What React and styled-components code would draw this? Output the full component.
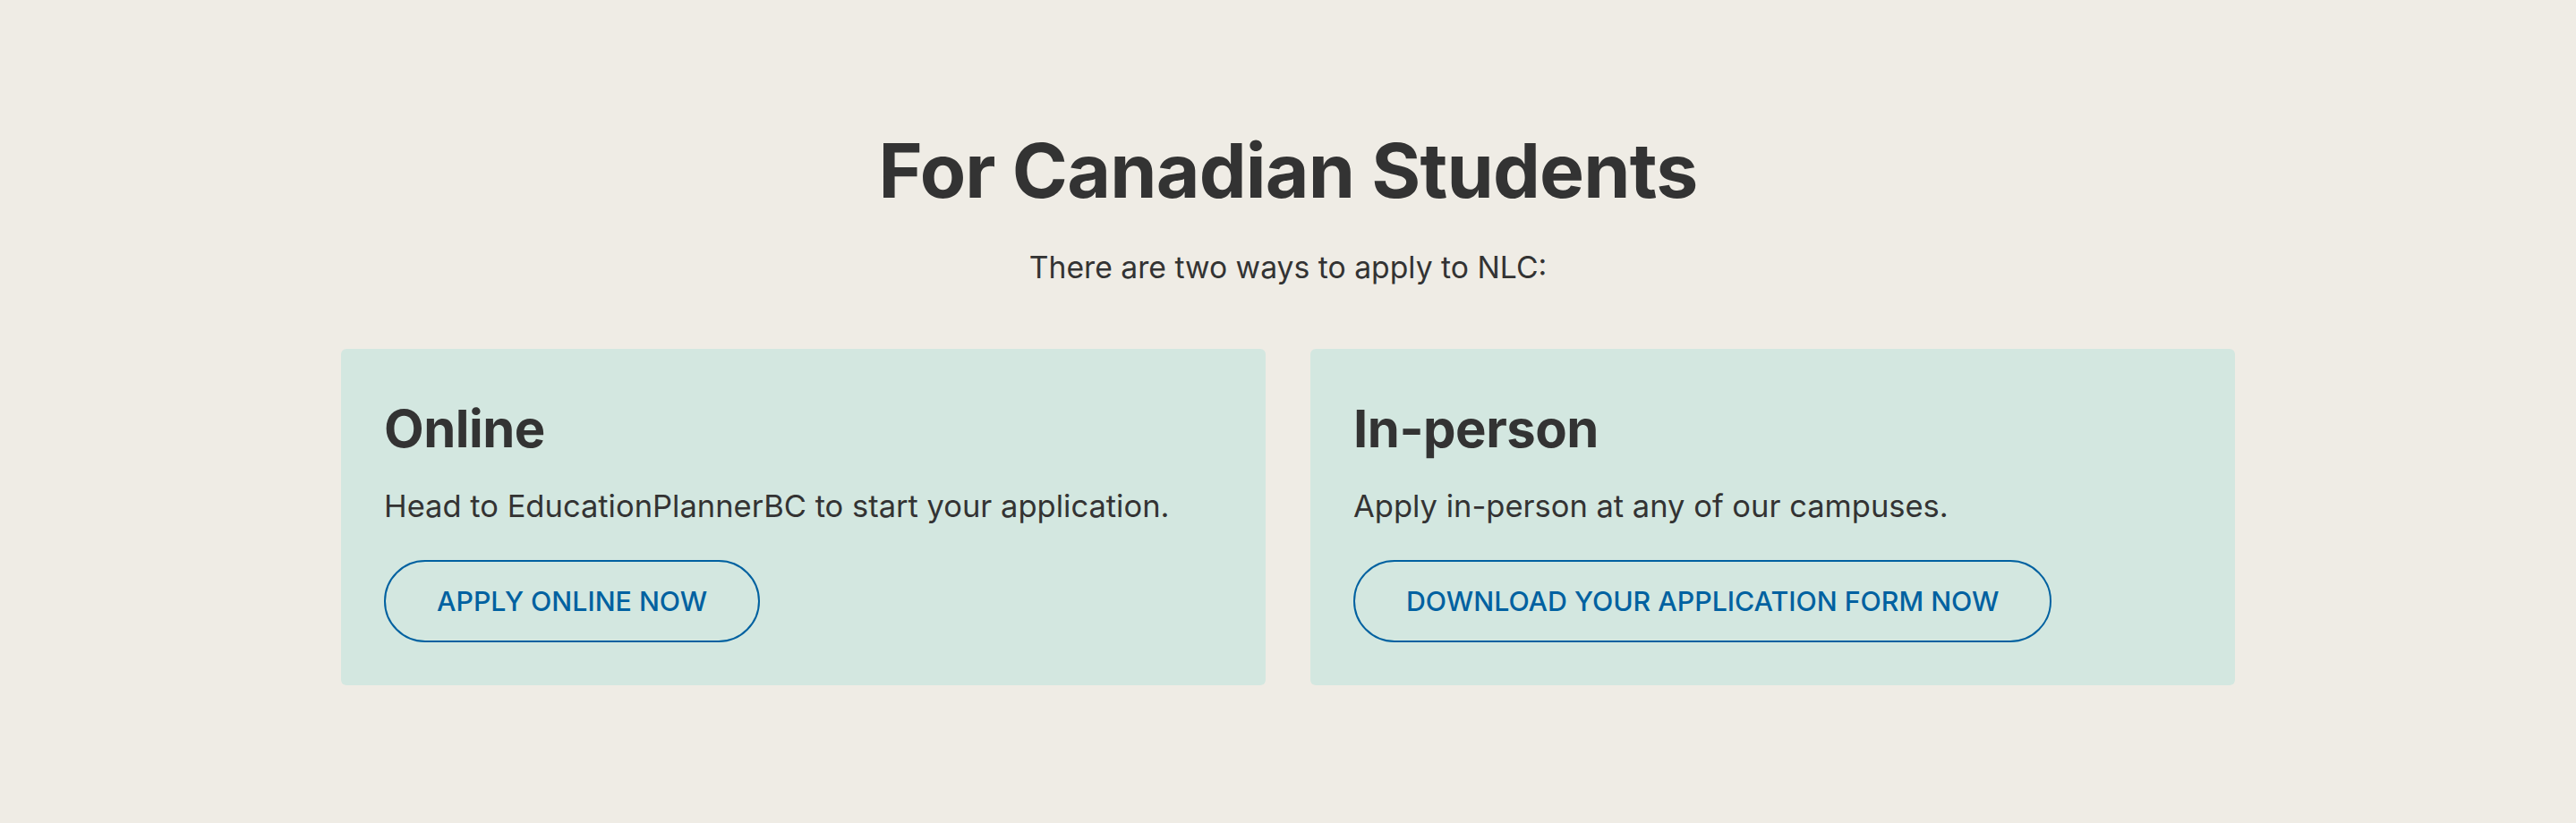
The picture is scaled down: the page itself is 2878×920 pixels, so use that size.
import React from "react"
import styled, { createGlobalStyle } from "styled-components"

const GlobalStyle = createGlobalStyle`
  html, body {
    margin: 0;
    padding: 0;
    background: #efece5;
  }
  body {
    font-family: Inter, "Noto Sans", sans-serif;
    color: #333333;
  }
`

const Section = styled.section`
  min-height: 920px;
  box-sizing: border-box;
  padding: 141px 0 0;
  display: flex;
  flex-direction: column;
  align-items: center;
`

const Title = styled.h2`
  margin: 0;
  font-size: 84px;
  line-height: 1.2;
  font-weight: 700;
  letter-spacing: -0.8px;
`

const Lead = styled.p`
  margin: 33px 0 0;
  font-size: 33.7px;
  line-height: 1.4;
`

const Cards = styled.div`
  width: 2116px;
  margin-top: 68px;
  display: grid;
  grid-template-columns: 1fr 1fr;
  gap: 50px;
`

const Card = styled.div`
  background: #d3e7e0;
  border-radius: 6px;
  padding: 55px 48px 48px;
  display: flex;
  flex-direction: column;
  align-items: flex-start;
`

const CardTitle = styled.h3`
  margin: 0;
  font-size: 58px;
  line-height: 1.2;
  font-weight: 700;
  letter-spacing: -0.5px;
`

const CardText = styled.p`
  margin: 27px 0 0;
  font-size: 34.5px;
  line-height: 1.4;
`

const Button = styled.a`
  margin-top: 36px;
  display: inline-flex;
  align-items: center;
  justify-content: center;
  height: 92px;
  box-sizing: border-box;
  padding: 0 57px;
  border: 2px solid #0061a0;
  border-radius: 46px;
  color: #0061a0;
  font-size: 30.3px;
  font-weight: 500;
  text-decoration: none;
  text-transform: uppercase;
`

const ways = [
  {
    title: "Online",
    text: "Head to EducationPlannerBC to start your application.",
    action: "Apply online now",
  },
  {
    title: "In-person",
    text: "Apply in-person at any of our campuses.",
    action: "Download your application form now",
  },
]

export default function App() {
  return (
    <>
      <GlobalStyle />
      <Section>
        <Title>For Canadian Students</Title>
        <Lead>There are two ways to apply to NLC:</Lead>
        <Cards>
          {ways.map((w) => (
            <Card key={w.title}>
              <CardTitle>{w.title}</CardTitle>
              <CardText>{w.text}</CardText>
              <Button href="#">{w.action}</Button>
            </Card>
          ))}
        </Cards>
      </Section>
    </>
  )
}
